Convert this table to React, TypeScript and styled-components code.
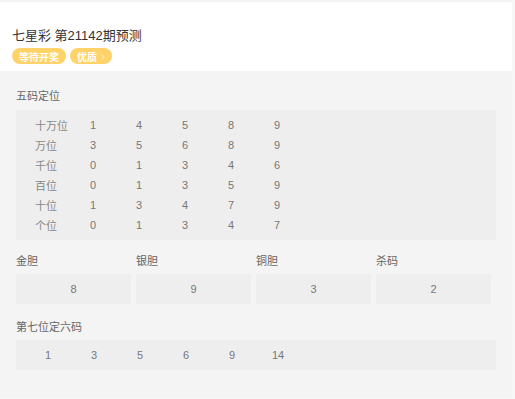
import React from "react";
import styled, { createGlobalStyle } from "styled-components";

const GlobalStyle = createGlobalStyle`
  html, body {
    margin: 0;
    padding: 0;
    background: #f7f7f7;
  }
  body {
    font-family: "Liberation Sans", Arial, "Noto Sans CJK SC", sans-serif;
  }
`;

const Page = styled.div`
  width: 512px;
  height: 396px;
  padding-top: 2px;
  background: #f4f4f4;
`;

const Header = styled.div`
  background: #ffffff;
  height: 69px;
  padding: 25px 12px 0;
  box-sizing: border-box;
`;

const Title = styled.h1`
  margin: 0;
  font-size: 13px;
  font-weight: normal;
  line-height: 18px;
  color: #333333;
  font-family: "Liberation Sans", "Noto Sans CJK SC", sans-serif;
`;

const Tags = styled.div`
  display: flex;
  gap: 4px;
  margin-top: 3px;
`;

const Tag = styled.span`
  display: inline-flex;
  align-items: center;
  height: 16px;
  padding: 0 7px;
  border-radius: 8px;
  background: #ffd26a;
  color: #ffffff;
  font-size: 10px;
  font-weight: bold;
  font-family: "Noto Sans CJK SC", sans-serif;
`;

const Chevron = styled.span`
  margin-left: 4px;
  font-size: 13px;
  line-height: 16px;
  opacity: 0.6;
  font-weight: normal;
`;

const Body = styled.div`
  padding: 16px 16px 0;
`;

const SectionTitle = styled.div`
  font-size: 11px;
  color: #666666;
  line-height: 16px;
  font-family: "Noto Sans CJK SC", sans-serif;
`;

const Table = styled.div`
  margin-top: 7px;
  width: 480px;
  background: #eeeeee;
  padding: 5px 0 5px 19px;
  box-sizing: border-box;
`;

const Row = styled.div`
  display: grid;
  grid-template-columns: 55px repeat(5, 46px);
  height: 20px;
  align-items: center;
  font-size: 11px;
  color: #777777;
`;

const RowLabel = styled.span`
  font-family: "Noto Sans CJK SC", sans-serif;
  color: #888888;
`;

const Cell = styled.span``;

const Picks = styled.div`
  display: flex;
  gap: 5px;
  margin-top: 12px;
`;

const Pick = styled.div`
  width: 115px;
  display: flex;
  flex-direction: column;
`;

const PickBox = styled.div`
  margin-top: 6px;
  height: 30px;
  background: #eeeeee;
  display: flex;
  align-items: center;
  justify-content: center;
  font-size: 11px;
  color: #777777;
`;

const SixBlock = styled.div`
  margin-top: 14px;
`;

const SixBox = styled.div`
  margin-top: 6px;
  width: 480px;
  height: 30px;
  background: #eeeeee;
  display: flex;
  align-items: center;
  padding-left: 9px;
  box-sizing: border-box;
`;

const SixCell = styled.span`
  width: 46px;
  text-align: center;
  font-size: 11px;
  color: #777777;
`;

const positions: [string, number[]][] = [
  ["十万位", [1, 4, 5, 8, 9]],
  ["万位", [3, 5, 6, 8, 9]],
  ["千位", [0, 1, 3, 4, 6]],
  ["百位", [0, 1, 3, 5, 9]],
  ["十位", [1, 3, 4, 7, 9]],
  ["个位", [0, 1, 3, 4, 7]],
];

const picks = [
  { label: "金胆", value: 8 },
  { label: "银胆", value: 9 },
  { label: "铜胆", value: 3 },
  { label: "杀码", value: 2 },
];

const sixCodes = [1, 3, 5, 6, 9, 14];

const App: React.FC = () => {
  return (
    <>
      <GlobalStyle />
      <Page>
        <Header>
          <Title>七星彩 第21142期预测</Title>
          <Tags>
            <Tag>等待开奖</Tag>
            <Tag>
              优质<Chevron>›</Chevron>
            </Tag>
          </Tags>
        </Header>
        <Body>
          <SectionTitle>五码定位</SectionTitle>
          <Table>
            {positions.map(([label, nums]) => (
              <Row key={label}>
                <RowLabel>{label}</RowLabel>
                {nums.map((n, i) => (
                  <Cell key={i}>{n}</Cell>
                ))}
              </Row>
            ))}
          </Table>
          <Picks>
            {picks.map((p) => (
              <Pick key={p.label}>
                <SectionTitle>{p.label}</SectionTitle>
                <PickBox>{p.value}</PickBox>
              </Pick>
            ))}
          </Picks>
          <SixBlock>
            <SectionTitle>第七位定六码</SectionTitle>
            <SixBox>
              {sixCodes.map((n) => (
                <SixCell key={n}>{n}</SixCell>
              ))}
            </SixBox>
          </SixBlock>
        </Body>
      </Page>
    </>
  );
};

export default App;
